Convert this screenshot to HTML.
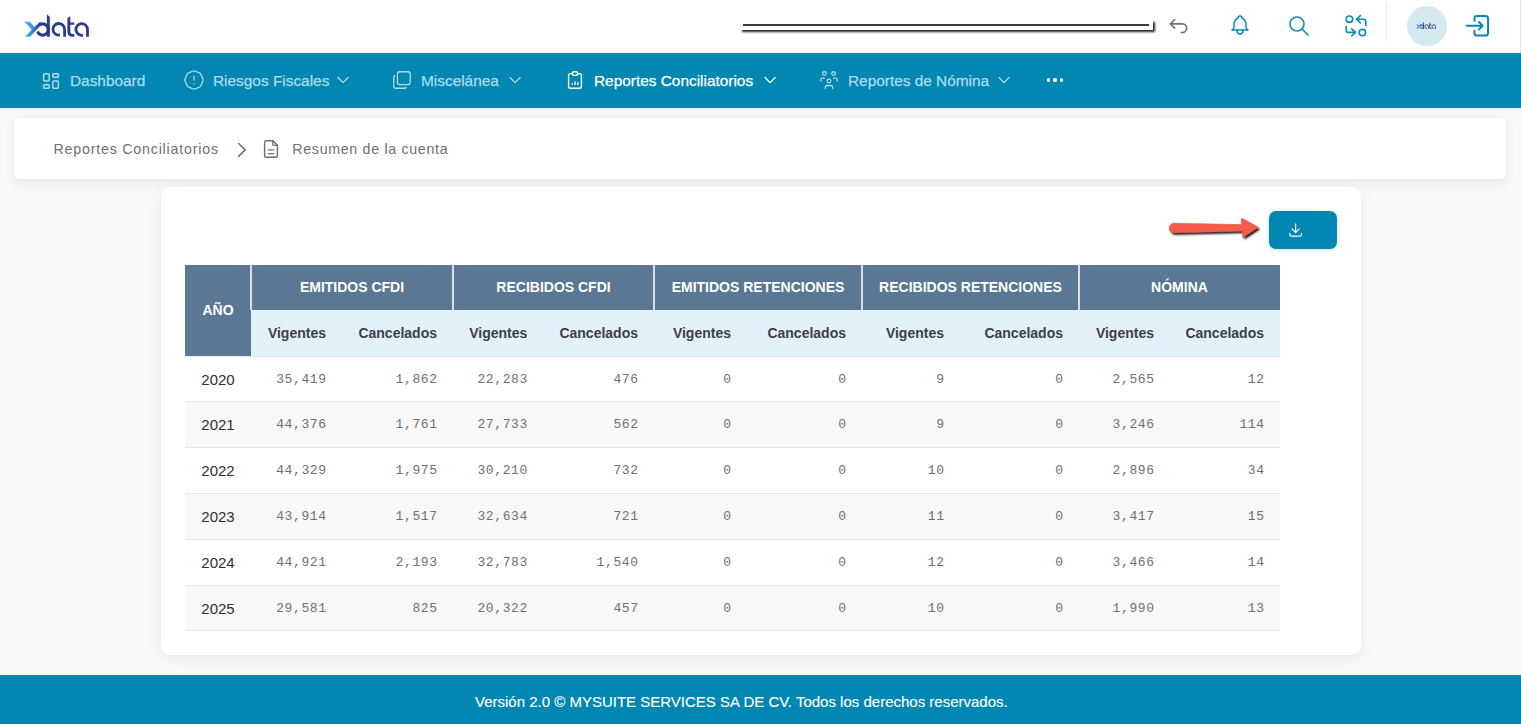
<!DOCTYPE html>
<html><head><meta charset="utf-8">
<style>
*{margin:0;padding:0;box-sizing:border-box}
html,body{width:1521px;height:724px;overflow:hidden;background:#F8F8FA;font-family:"Liberation Sans",sans-serif}
.abs{position:absolute}
svg{position:absolute;overflow:visible}
#hdr{position:absolute;left:0;top:0;width:1521px;height:53px;background:#fff}
#nav{position:absolute;left:0;top:53px;width:1521px;height:55px;background:#0187B1;box-shadow:0 1px 4px rgba(20,20,40,0.06)}
.ni{position:absolute;top:53px;height:55px;line-height:55.5px;font-size:15.4px;color:#B0DCEB;white-space:nowrap;-webkit-text-stroke:0.25px #B0DCEB}
.ni.act{-webkit-text-stroke:0.25px #fff}
.ni.act{color:#fff}
#bc{position:absolute;left:14px;top:118px;width:1491.5px;height:61px;background:#fff;border-radius:6px;box-shadow:0 4px 12px rgba(40,30,70,0.08)}
.bct{position:absolute;top:118.4px;height:61px;line-height:62px;font-size:14.2px;color:#6F6E7A;white-space:nowrap}
#card{position:absolute;left:161px;top:187px;width:1200px;height:468px;background:#fff;border-radius:10px;box-shadow:0 4px 16px rgba(30,30,50,0.06)}
#foot{position:absolute;left:0;top:675px;width:1521px;height:49px;background:#0187B1;color:#fff;font-size:15px;line-height:53px;white-space:nowrap;padding-left:475px;-webkit-text-stroke:0.12px #fff}
.th1{position:absolute;color:#fff;font-weight:bold;font-size:14px;text-align:center;white-space:nowrap}
.th2{position:absolute;color:#3B4048;font-weight:bold;font-size:14px;text-align:right;white-space:nowrap}
.yr{position:absolute;color:#2F3033;font-size:15px;text-align:center}
.num{position:absolute;color:#6E7073;font-family:"Liberation Mono",monospace;font-size:13px;letter-spacing:0.6px;text-align:right}
</style></head><body>
<div id="hdr"></div>
<div class="abs" style="left:1519.5px;top:0;width:1.5px;height:53px;background:#E4E4E6"></div>
<div id="nav"></div>
<svg style="left:0;top:0" width="0" height="0"><defs>
<linearGradient id="lgb" gradientUnits="userSpaceOnUse" x1="170" y1="500" x2="420" y2="290"><stop offset="0" stop-color="#45AEE5"/><stop offset="0.45" stop-color="#3A7FC6"/><stop offset="1" stop-color="#2C3A91"/></linearGradient>
<linearGradient id="lga" gradientUnits="userSpaceOnUse" x1="153" y1="271" x2="318" y2="400"><stop offset="0" stop-color="#4AB2E8"/><stop offset="1" stop-color="#3F8FD2"/></linearGradient>
<symbol id="xlogo" viewBox="0 0 1448 724">
<path d="M393.8,320 A90,90 0 1 1 360.8,424.5" fill="none" stroke="#2C3A91" stroke-width="50"/>
<polygon points="153,271.2 237,271.2 317.9,358.3 274.3,401.8" fill="url(#lga)"/>
<path d="M300,481 L396,379" stroke="#fff" stroke-width="12" fill="none"/>
<polygon points="159.3,510.7 243.2,510.7 442.3,299.2 392.5,277.4" fill="url(#lgb)"/>
<path d="M512.7,150 L560.4,193.5 L560.4,510.7 L512.7,510.7 Z" fill="#2C3A91"/>
<path d="M723.8,481.9 A93.3,93.3 0 1 1 797.7,390.6 L797.7,510.7" fill="none" stroke="#2C3A91" stroke-width="45"/>
<path d="M843,215 L890,175 L890,280.5 L955,280.5 L955,318 L890,318 L890,435 Q890,468 925,468 L955,468 L955,511 L930,511 Q843,511 843,430 Z" fill="#2C3A91"/>
<path d="M1092.6,485 A93.3,93.3 0 1 1 1166.5,393.7 L1166.5,510.7" fill="none" stroke="#2C3A91" stroke-width="45"/>
</symbol></defs></svg>
<svg style="left:15px;top:5px" width="90" height="45"><use href="#xlogo"/></svg>

<div class="abs" style="left:739.5px;top:19.5px;width:413.5px;height:10.5px;background:#fff;box-shadow:0 -0.5px 1px rgba(0,0,0,0.06),1.8px 2px 2px rgba(0,0,0,0.85)"></div>
<div class="abs" style="left:743px;top:24px;width:406px;height:1.9px;background:#3A3C3E"></div>
<svg style="left:1165px;top:13px" width="26" height="26" viewBox="0 0 24 24" fill="none" stroke="#6E7075" stroke-width="1.5" stroke-linecap="round" stroke-linejoin="round"><path d="M9 14l-4-4 4-4"/><path d="M5 10h11a4 4 0 1 1 0 8h-1"/></svg>
<svg style="left:1228px;top:13.4px" width="24" height="24" viewBox="0 0 24 24" fill="none" stroke="#0A8AB3" stroke-width="1.45" stroke-linecap="round" stroke-linejoin="round"><path d="M10 5a2 2 0 1 1 4 0a7 7 0 0 1 4 6v3a4 4 0 0 0 2 3h-16a4 4 0 0 0 2-3v-3a7 7 0 0 1 4-6"/><path d="M9 17v1a3 3 0 0 0 6 0v-1"/></svg>
<svg style="left:1286.7px;top:14px" width="24" height="24" viewBox="0 0 24 24" fill="none" stroke="#0A8AB3" stroke-width="1.6" stroke-linecap="round" stroke-linejoin="round"><circle cx="10" cy="10" r="7"/><path d="M21 21l-6-6"/></svg>
<svg style="left:1336px;top:8px" width="40" height="36" viewBox="0 0 40 36" fill="none" stroke="#0A8AB3" stroke-width="1.6" stroke-linecap="round" stroke-linejoin="round"><circle cx="13.4" cy="11.2" r="3.2"/><circle cx="26.4" cy="24.6" r="3.2"/><path d="M29.8,17.4 V13.4 Q29.8,11.2 27.6,11.2 H20.6"/><path d="M24.4,7.6 L20.6,11.2 L24.4,14.8"/><path d="M10.2,18.4 V22.2 Q10.2,24.4 12.4,24.4 H19.4"/><path d="M15.6,20.8 L19.4,24.4 L15.6,28"/></svg>
<div class="abs" style="left:1386px;top:3px;width:1px;height:38px;background:#ECEDEF"></div>
<div class="abs" style="left:1407px;top:6px;width:40px;height:40px;border-radius:50%;background:#D6E9F1"></div>
<svg style="left:1413px;top:18.8px" width="28" height="14"><use href="#xlogo"/></svg>
<svg style="left:1462.5px;top:11px" width="29.5" height="29.5" viewBox="0 0 24 24" fill="none" stroke="#0A8AB3" stroke-width="1.6" stroke-linecap="round" stroke-linejoin="round"><path d="M14 8v-2a2 2 0 0 0-2-2h-7a2 2 0 0 0-2 2v12a2 2 0 0 0 2 2h7a2 2 0 0 0 2-2v-2" transform="translate(23.35,0) scale(-1,1)"/><path d="M3 12h13l-3-3m0 6l3-3"/></svg>


<svg style="left:40.1px;top:70px" width="22" height="22" viewBox="0 0 24 24" fill="none" stroke="#B0DCEB" stroke-width="1.6" stroke-linecap="round" stroke-linejoin="round"><path d="M5 4h4a1 1 0 0 1 1 1v6a1 1 0 0 1-1 1h-4a1 1 0 0 1-1-1v-6a1 1 0 0 1 1-1"/><path d="M5 16h4a1 1 0 0 1 1 1v2a1 1 0 0 1-1 1h-4a1 1 0 0 1-1-1v-2a1 1 0 0 1 1-1"/><path d="M15 12h4a1 1 0 0 1 1 1v6a1 1 0 0 1-1 1h-4a1 1 0 0 1-1-1v-6a1 1 0 0 1 1-1"/><path d="M15 4h4a1 1 0 0 1 1 1v2a1 1 0 0 1-1 1h-4a1 1 0 0 1-1-1v-2a1 1 0 0 1 1-1"/></svg>
<div class="ni" style="left:70px">Dashboard</div>
<svg style="left:183px;top:69.3px" width="22" height="22" viewBox="0 0 24 24" fill="none" stroke="#B0DCEB" stroke-width="1.4" stroke-linecap="round" stroke-linejoin="round"><path d="M12.802 2.165l5.575 2.389c.48 .206 .863 .589 1.07 1.07l2.388 5.574c.22 .512 .22 1.092 0 1.604l-2.389 5.575c-.206 .48 -.589 .863 -1.07 1.07l-5.574 2.388c-.512 .22 -1.092 .22 -1.604 0l-5.575 -2.389a2.036 2.036 0 0 1 -1.07 -1.07l-2.388 -5.574a2.036 2.036 0 0 1 0 -1.604l2.389 -5.575c.206 -.48 .589 -.863 1.07 -1.07l5.574 -2.388a2.036 2.036 0 0 1 1.604 0z"/><path d="M12 8v4"/><path d="M12 16h.01"/></svg>
<div class="ni" style="left:213px">Riesgos Fiscales</div>
<svg style="left:333.4px;top:70.1px" width="20.2" height="20.2" viewBox="0 0 24 24" fill="none" stroke="#B0DCEB" stroke-width="1.55" stroke-linecap="round" stroke-linejoin="round"><path d="M6 9l6 6l6-6"/></svg>
<svg style="left:391px;top:69.3px" width="22" height="22" viewBox="0 0 24 24" fill="none" stroke="#B0DCEB" stroke-width="1.4" stroke-linecap="round" stroke-linejoin="round"><path d="M7 3m0 2.667a2.667 2.667 0 0 1 2.667 -2.667h8.666a2.667 2.667 0 0 1 2.667 2.667v8.666a2.667 2.667 0 0 1 -2.667 2.667h-8.666a2.667 2.667 0 0 1 -2.667 -2.667z"/><path d="M4.012 7.26a2.005 2.005 0 0 0 -1.012 1.737v10c0 1.1 .9 2 2 2h10c.75 0 1.158 -.385 1.5 -1"/></svg>
<div class="ni" style="left:421px">Miscelánea</div>
<svg style="left:505.4px;top:70.1px" width="20.2" height="20.2" viewBox="0 0 24 24" fill="none" stroke="#B0DCEB" stroke-width="1.55" stroke-linecap="round" stroke-linejoin="round"><path d="M6 9l6 6l6-6"/></svg>
<svg style="left:564px;top:69px" width="22" height="22" viewBox="0 0 24 24" fill="none" stroke="#fff" stroke-width="1.5" stroke-linecap="round" stroke-linejoin="round"><path d="M9 5h-2a2 2 0 0 0-2 2v12a2 2 0 0 0 2 2h10a2 2 0 0 0 2-2v-12a2 2 0 0 0-2-2h-2"/><path d="M9 3m0 2a2 2 0 0 1 2-2h2a2 2 0 0 1 2 2v0a2 2 0 0 1-2 2h-2a2 2 0 0 1-2-2z"/><path d="M9 17v-1"/><path d="M12 17v-3"/><path d="M15 17v-2"/></svg>
<div class="ni act" style="left:594px">Reportes Conciliatorios</div>
<svg style="left:759.8px;top:70.1px" width="20.2" height="20.2" viewBox="0 0 24 24" fill="none" stroke="#fff" stroke-width="1.55" stroke-linecap="round" stroke-linejoin="round"><path d="M6 9l6 6l6-6"/></svg>
<svg style="left:818px;top:69px" width="22" height="22" viewBox="0 0 24 24" fill="none" stroke="#B0DCEB" stroke-width="1.4" stroke-linecap="round" stroke-linejoin="round"><path d="M10 13a2 2 0 1 0 4 0a2 2 0 0 0-4 0"/><path d="M8 21v-1a2 2 0 0 1 2-2h4a2 2 0 0 1 2 2v1"/><path d="M15 5a2 2 0 1 0 4 0a2 2 0 0 0-4 0"/><path d="M17 10h2a2 2 0 0 1 2 2v1"/><path d="M5 5a2 2 0 1 0 4 0a2 2 0 0 0-4 0"/><path d="M3 13v-1a2 2 0 0 1 2-2h2"/></svg>
<div class="ni" style="left:848px">Reportes de Nómina</div>
<svg style="left:993.9px;top:70.1px" width="20.2" height="20.2" viewBox="0 0 24 24" fill="none" stroke="#B0DCEB" stroke-width="1.55" stroke-linecap="round" stroke-linejoin="round"><path d="M6 9l6 6l6-6"/></svg>
<div class="abs" style="left:1046.5px;top:78.3px;width:3.4px;height:3.4px;border-radius:50%;background:#fff"></div>
<div class="abs" style="left:1053.3px;top:78.3px;width:3.4px;height:3.4px;border-radius:50%;background:#fff"></div>
<div class="abs" style="left:1060px;top:78.3px;width:3.4px;height:3.4px;border-radius:50%;background:#fff"></div>

<div id="bc"></div>

<div class="bct" style="left:53.5px;letter-spacing:0.81px">Reportes Conciliatorios</div>
<svg style="left:229px;top:137.3px" width="25.8" height="25.8" viewBox="0 0 24 24" fill="none" stroke="#6D6F73" stroke-width="1.4" stroke-linecap="round" stroke-linejoin="round"><path d="M9 6l6 6l-6 6"/></svg>
<svg style="left:260px;top:138px" width="22" height="22" viewBox="0 0 24 24" fill="none" stroke="#6D6F73" stroke-width="1.5" stroke-linecap="round" stroke-linejoin="round"><path d="M14 3v4a1 1 0 0 0 1 1h4"/><path d="M17 21h-10a2 2 0 0 1-2-2v-14a2 2 0 0 1 2-2h7l5 5v11a2 2 0 0 1-2 2z"/><path d="M9 13h6"/><path d="M9 17h6"/></svg>
<div class="bct" style="left:292.3px;letter-spacing:0.7px">Resumen de la cuenta</div>

<div id="card"></div>

<svg style="left:1160px;top:205px" width="110" height="45" viewBox="0 0 110 45">
<defs><filter id="blr" x="-20%" y="-50%" width="140%" height="200%"><feGaussianBlur stdDeviation="0.9"/></filter></defs>
<path transform="translate(1.6,1.8)" filter="url(#blr)" fill="#000" opacity="1" d="M14,18.3 L81.5,19.6 L81.5,13.1 L98.5,22.5 L82.7,32.8 L82.3,26.2 L14,28 A4.85,4.85 0 0 1 14,18.3 Z"/>
<path fill="#F45B4B" stroke="#F45B4B" stroke-width="0.6" stroke-linejoin="round" d="M14,18.3 L81.5,19.6 L81.5,13.1 L98.5,22.5 L82.7,32.8 L82.3,26.2 L14,28 A4.85,4.85 0 0 1 14,18.3 Z"/>
</svg>
<div class="abs" style="left:1269px;top:211px;width:68px;height:38px;border-radius:7px;background:#0187B1;box-shadow:0 1px 5px rgba(1,135,177,0.22)"></div>
<svg style="left:1287.1px;top:221.4px" width="17.3" height="17.3" viewBox="0 0 24 24" fill="none" stroke="#fff" stroke-width="1.6" stroke-linecap="round" stroke-linejoin="round"><path d="M4 17v2a2 2 0 0 0 2 2h12a2 2 0 0 0 2-2v-2"/><path d="M7 11l5 5l5-5"/><path d="M12 4v12"/></svg>

<div class="abs" style="left:185px;top:265px;width:66px;height:91px;background:#5A7794"></div>
<div class="th1" style="left:185px;top:265px;width:66px;height:91px;line-height:91px">AÑO</div>
<div class="th1" style="left:251px;top:265px;width:202px;height:44.7px;line-height:44.5px;background:#5A7794">EMITIDOS CFDI</div>
<div class="abs" style="left:250.1px;top:265px;width:1.5px;height:44.7px;background:#D9DEE3"></div>
<div class="th1" style="left:453px;top:265px;width:201px;height:44.7px;line-height:44.5px;background:#5A7794">RECIBIDOS CFDI</div>
<div class="abs" style="left:452.1px;top:265px;width:1.5px;height:44.7px;background:#D9DEE3"></div>
<div class="th1" style="left:654px;top:265px;width:208px;height:44.7px;line-height:44.5px;background:#5A7794">EMITIDOS RETENCIONES</div>
<div class="abs" style="left:653.1px;top:265px;width:1.5px;height:44.7px;background:#D9DEE3"></div>
<div class="th1" style="left:862px;top:265px;width:217px;height:44.7px;line-height:44.5px;background:#5A7794">RECIBIDOS RETENCIONES</div>
<div class="abs" style="left:861.1px;top:265px;width:1.5px;height:44.7px;background:#D9DEE3"></div>
<div class="th1" style="left:1079px;top:265px;width:201px;height:44.7px;line-height:44.5px;background:#5A7794">NÓMINA</div>
<div class="abs" style="left:1078.1px;top:265px;width:1.5px;height:44.7px;background:#D9DEE3"></div>
<div class="abs" style="left:250.6px;top:309.7px;width:1029.4px;height:46.3px;background:#E3F1FB"></div>
<div class="th2" style="left:251px;top:310px;width:75px;height:46.6px;line-height:47px">Vigentes</div>
<div class="th2" style="left:342px;top:310px;width:95px;height:46.6px;line-height:47px">Cancelados</div>
<div class="th2" style="left:453px;top:310px;width:74.29999999999995px;height:46.6px;line-height:47px">Vigentes</div>
<div class="th2" style="left:543.3px;top:310px;width:94.70000000000005px;height:46.6px;line-height:47px">Cancelados</div>
<div class="th2" style="left:654px;top:310px;width:77px;height:46.6px;line-height:47px">Vigentes</div>
<div class="th2" style="left:747px;top:310px;width:99px;height:46.6px;line-height:47px">Cancelados</div>
<div class="th2" style="left:862px;top:310px;width:82px;height:46.6px;line-height:47px">Vigentes</div>
<div class="th2" style="left:960px;top:310px;width:103px;height:46.6px;line-height:47px">Cancelados</div>
<div class="th2" style="left:1079px;top:310px;width:75px;height:46.6px;line-height:47px">Vigentes</div>
<div class="th2" style="left:1170px;top:310px;width:94px;height:46.6px;line-height:47px">Cancelados</div>
<div class="abs" style="left:185px;top:356px;width:1095px;height:1px;background:#E4E6E8"></div>
<div class="abs" style="left:185px;top:357px;width:1095px;height:45px;background:#FFFFFF;border-bottom:1px solid #E6E6E6"></div>
<div class="yr" style="left:185px;top:356px;width:66px;height:45px;line-height:47px">2020</div>
<div class="num" style="left:251px;top:356px;width:75.6px;height:45px;line-height:47px">35,419</div>
<div class="num" style="left:342px;top:356px;width:95.6px;height:45px;line-height:47px">1,862</div>
<div class="num" style="left:453px;top:356px;width:74.89999999999995px;height:45px;line-height:47px">22,283</div>
<div class="num" style="left:543.3px;top:356px;width:95.30000000000004px;height:45px;line-height:47px">476</div>
<div class="num" style="left:654px;top:356px;width:77.6px;height:45px;line-height:47px">0</div>
<div class="num" style="left:747px;top:356px;width:99.6px;height:45px;line-height:47px">0</div>
<div class="num" style="left:862px;top:356px;width:82.6px;height:45px;line-height:47px">9</div>
<div class="num" style="left:960px;top:356px;width:103.6px;height:45px;line-height:47px">0</div>
<div class="num" style="left:1079px;top:356px;width:75.6px;height:45px;line-height:47px">2,565</div>
<div class="num" style="left:1170px;top:356px;width:94.6px;height:45px;line-height:47px">12</div>
<div class="abs" style="left:185px;top:402px;width:1095px;height:46px;background:#F8F8F8;border-bottom:1px solid #E6E6E6"></div>
<div class="yr" style="left:185px;top:401px;width:66px;height:46px;line-height:48px">2021</div>
<div class="num" style="left:251px;top:401px;width:75.6px;height:46px;line-height:48px">44,376</div>
<div class="num" style="left:342px;top:401px;width:95.6px;height:46px;line-height:48px">1,761</div>
<div class="num" style="left:453px;top:401px;width:74.89999999999995px;height:46px;line-height:48px">27,733</div>
<div class="num" style="left:543.3px;top:401px;width:95.30000000000004px;height:46px;line-height:48px">562</div>
<div class="num" style="left:654px;top:401px;width:77.6px;height:46px;line-height:48px">0</div>
<div class="num" style="left:747px;top:401px;width:99.6px;height:46px;line-height:48px">0</div>
<div class="num" style="left:862px;top:401px;width:82.6px;height:46px;line-height:48px">9</div>
<div class="num" style="left:960px;top:401px;width:103.6px;height:46px;line-height:48px">0</div>
<div class="num" style="left:1079px;top:401px;width:75.6px;height:46px;line-height:48px">3,246</div>
<div class="num" style="left:1170px;top:401px;width:94.6px;height:46px;line-height:48px">114</div>
<div class="abs" style="left:185px;top:448px;width:1095px;height:46px;background:#FFFFFF;border-bottom:1px solid #E6E6E6"></div>
<div class="yr" style="left:185px;top:447px;width:66px;height:46px;line-height:48px">2022</div>
<div class="num" style="left:251px;top:447px;width:75.6px;height:46px;line-height:48px">44,329</div>
<div class="num" style="left:342px;top:447px;width:95.6px;height:46px;line-height:48px">1,975</div>
<div class="num" style="left:453px;top:447px;width:74.89999999999995px;height:46px;line-height:48px">30,210</div>
<div class="num" style="left:543.3px;top:447px;width:95.30000000000004px;height:46px;line-height:48px">732</div>
<div class="num" style="left:654px;top:447px;width:77.6px;height:46px;line-height:48px">0</div>
<div class="num" style="left:747px;top:447px;width:99.6px;height:46px;line-height:48px">0</div>
<div class="num" style="left:862px;top:447px;width:82.6px;height:46px;line-height:48px">10</div>
<div class="num" style="left:960px;top:447px;width:103.6px;height:46px;line-height:48px">0</div>
<div class="num" style="left:1079px;top:447px;width:75.6px;height:46px;line-height:48px">2,896</div>
<div class="num" style="left:1170px;top:447px;width:94.6px;height:46px;line-height:48px">34</div>
<div class="abs" style="left:185px;top:494px;width:1095px;height:46px;background:#F8F8F8;border-bottom:1px solid #E6E6E6"></div>
<div class="yr" style="left:185px;top:493px;width:66px;height:46px;line-height:48px">2023</div>
<div class="num" style="left:251px;top:493px;width:75.6px;height:46px;line-height:48px">43,914</div>
<div class="num" style="left:342px;top:493px;width:95.6px;height:46px;line-height:48px">1,517</div>
<div class="num" style="left:453px;top:493px;width:74.89999999999995px;height:46px;line-height:48px">32,634</div>
<div class="num" style="left:543.3px;top:493px;width:95.30000000000004px;height:46px;line-height:48px">721</div>
<div class="num" style="left:654px;top:493px;width:77.6px;height:46px;line-height:48px">0</div>
<div class="num" style="left:747px;top:493px;width:99.6px;height:46px;line-height:48px">0</div>
<div class="num" style="left:862px;top:493px;width:82.6px;height:46px;line-height:48px">11</div>
<div class="num" style="left:960px;top:493px;width:103.6px;height:46px;line-height:48px">0</div>
<div class="num" style="left:1079px;top:493px;width:75.6px;height:46px;line-height:48px">3,417</div>
<div class="num" style="left:1170px;top:493px;width:94.6px;height:46px;line-height:48px">15</div>
<div class="abs" style="left:185px;top:540px;width:1095px;height:46px;background:#FFFFFF;border-bottom:1px solid #E6E6E6"></div>
<div class="yr" style="left:185px;top:539px;width:66px;height:46px;line-height:48px">2024</div>
<div class="num" style="left:251px;top:539px;width:75.6px;height:46px;line-height:48px">44,921</div>
<div class="num" style="left:342px;top:539px;width:95.6px;height:46px;line-height:48px">2,193</div>
<div class="num" style="left:453px;top:539px;width:74.89999999999995px;height:46px;line-height:48px">32,783</div>
<div class="num" style="left:543.3px;top:539px;width:95.30000000000004px;height:46px;line-height:48px">1,540</div>
<div class="num" style="left:654px;top:539px;width:77.6px;height:46px;line-height:48px">0</div>
<div class="num" style="left:747px;top:539px;width:99.6px;height:46px;line-height:48px">0</div>
<div class="num" style="left:862px;top:539px;width:82.6px;height:46px;line-height:48px">12</div>
<div class="num" style="left:960px;top:539px;width:103.6px;height:46px;line-height:48px">0</div>
<div class="num" style="left:1079px;top:539px;width:75.6px;height:46px;line-height:48px">3,466</div>
<div class="num" style="left:1170px;top:539px;width:94.6px;height:46px;line-height:48px">14</div>
<div class="abs" style="left:185px;top:586px;width:1095px;height:45px;background:#F8F8F8;border-bottom:1px solid #E6E6E6"></div>
<div class="yr" style="left:185px;top:585px;width:66px;height:45px;line-height:47px">2025</div>
<div class="num" style="left:251px;top:585px;width:75.6px;height:45px;line-height:47px">29,581</div>
<div class="num" style="left:342px;top:585px;width:95.6px;height:45px;line-height:47px">825</div>
<div class="num" style="left:453px;top:585px;width:74.89999999999995px;height:45px;line-height:47px">20,322</div>
<div class="num" style="left:543.3px;top:585px;width:95.30000000000004px;height:45px;line-height:47px">457</div>
<div class="num" style="left:654px;top:585px;width:77.6px;height:45px;line-height:47px">0</div>
<div class="num" style="left:747px;top:585px;width:99.6px;height:45px;line-height:47px">0</div>
<div class="num" style="left:862px;top:585px;width:82.6px;height:45px;line-height:47px">10</div>
<div class="num" style="left:960px;top:585px;width:103.6px;height:45px;line-height:47px">0</div>
<div class="num" style="left:1079px;top:585px;width:75.6px;height:45px;line-height:47px">1,990</div>
<div class="num" style="left:1170px;top:585px;width:94.6px;height:45px;line-height:47px">13</div>
<div id="foot">Versión 2.0 © MYSUITE SERVICES SA DE CV. Todos los derechos reservados.</div>
</body></html>
